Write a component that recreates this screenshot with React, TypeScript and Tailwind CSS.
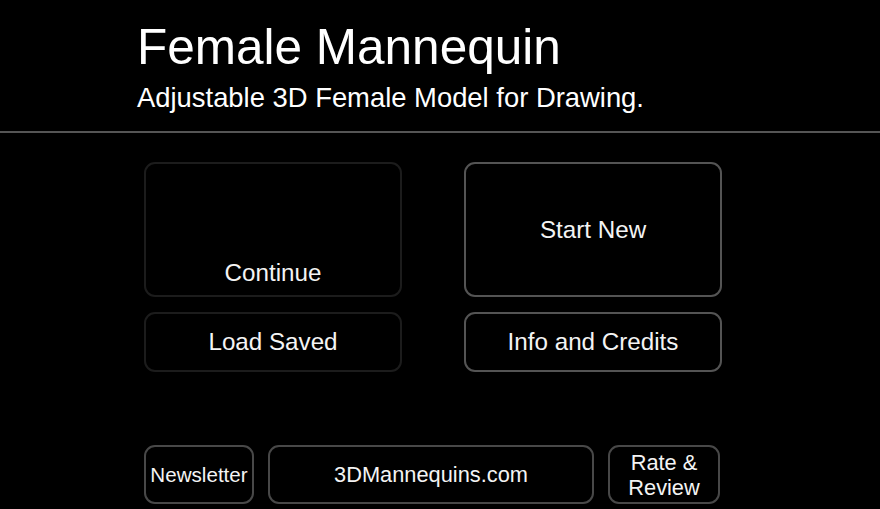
import React from "react";

function Tile({
  label,
  className,
}: {
  label: React.ReactNode;
  className: string;
}) {
  return (
    <button
      type="button"
      className={`flex justify-center rounded-[11px] border-2 bg-black text-[#f4f4f4] ${className}`}
    >
      {label}
    </button>
  );
}

export default function App() {
  return (
    <div className="w-[880px] h-[509px] overflow-hidden bg-black text-white flex flex-col font-['Liberation_Sans',Arial,sans-serif]">
      <header className="h-[131px] pl-[137px] pt-[22px]">
        <h1 className="text-[49.5px] leading-none">Female Mannequin</h1>
        <p className="mt-[12px] text-[27.4px] leading-none">
          Adjustable 3D Female Model for Drawing.
        </p>
      </header>
      <div className="h-[2px] bg-[#555]" />

      <main className="pl-[144px] pt-[29px]">
        <div className="grid grid-cols-[258px_258px] grid-rows-[135px_60px] gap-x-[62px] gap-y-[15px]">
          <Tile
            label="Continue"
            className="items-end pb-2 text-[24.2px] leading-7 border-[#1c1c1c]"
          />
          <Tile
            label="Start New"
            className="items-center text-[24.2px] leading-7 border-[#545454]"
          />
          <Tile
            label="Load Saved"
            className="items-center text-[24.2px] leading-7 border-[#1c1c1c]"
          />
          <Tile
            label="Info and Credits"
            className="items-center text-[24.2px] leading-7 border-[#545454]"
          />
        </div>

        <div className="mt-[73px] flex gap-[14px] h-[59px]">
          <Tile
            label="Newsletter"
            className="w-[110px] items-center text-[20.6px] leading-6 border-[#484848]"
          />
          <Tile
            label="3DMannequins.com"
            className="w-[326px] items-center text-[21.8px] leading-6 border-[#484848]"
          />
          <Tile
            label={
              <span className="block">
                Rate &amp;
                <br />
                Review
              </span>
            }
            className="w-[112px] items-center text-[21.8px] leading-[25px] border-[#484848]"
          />
        </div>
      </main>
    </div>
  );
}
